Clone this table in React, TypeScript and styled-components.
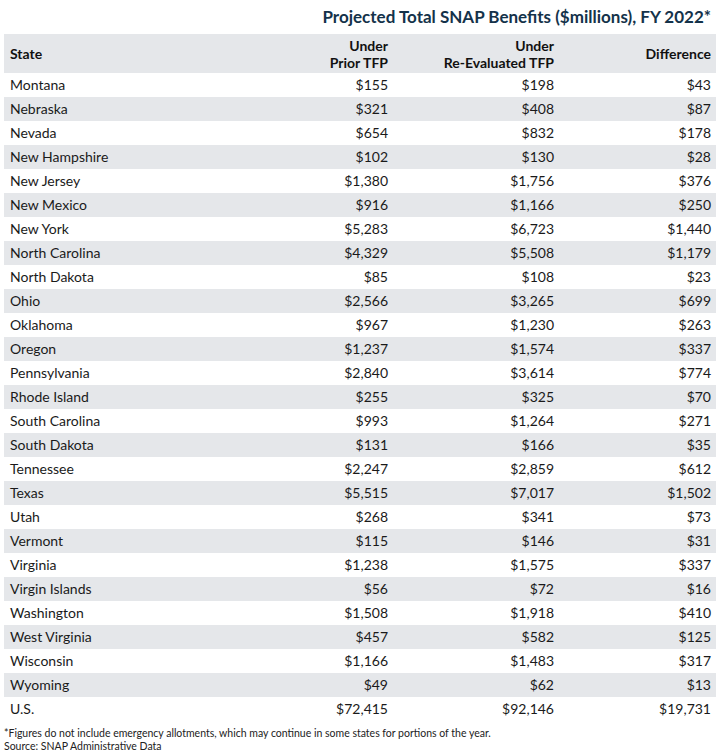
import React from "react";
import styled, { createGlobalStyle } from "styled-components";

const Global = createGlobalStyle`
  html, body { margin: 0; padding: 0; background: #ffffff; }
  body { font-family: "Lato", "Open Sans", "Liberation Sans", sans-serif; color: #1a1a1a; }
`;

const Page = styled.div`
  width: 712px;
  padding: 0 8px 0 4px;
`;

const Title = styled.div`
  height: 34px;
  display: flex;
  align-items: center;
  justify-content: flex-end;
  padding-right: 5px;
  font-size: 17px;
  font-weight: 700;
  color: #14324a;
  padding-bottom: 1px;
  box-sizing: border-box;
`;

const cols = "223px 166px 166px 157px";

const HeaderRow = styled.div`
  display: grid;
  grid-template-columns: ${cols};
  height: 39px;
  background: #e5e7ea;
  font-weight: 700;
  font-size: 14px;
  line-height: 17px;
  color: #111;
`;

const HeadCell = styled.div<{ $left?: boolean }>`
  display: flex;
  align-items: center;
  justify-content: ${(p) => (p.$left ? "flex-start" : "flex-end")};
  text-align: ${(p) => (p.$left ? "left" : "right")};
  padding: ${(p) => (p.$left ? "0 0 0 6px" : "0 5px 0 0")};
`;

const Row = styled.div<{ $shaded: boolean }>`
  display: grid;
  grid-template-columns: ${cols};
  height: 24px;
  box-sizing: border-box;
  padding-bottom: 2px;
  align-items: center;
  background: ${(p) => (p.$shaded ? "#e5e7ea" : "#ffffff")};
  font-size: 14px;
`;

const Cell = styled.div<{ $left?: boolean }>`
  text-align: ${(p) => (p.$left ? "left" : "right")};
  padding: ${(p) => (p.$left ? "0 0 0 6px" : "0 5px 0 0")};
`;

const Footer = styled.div`
  margin-top: 6px;
  font-size: 10.5px;
  line-height: 13px;
  color: #222;
`;

const data: [string, string, string, string][] = [
  ["Montana", "$155", "$198", "$43"],
  ["Nebraska", "$321", "$408", "$87"],
  ["Nevada", "$654", "$832", "$178"],
  ["New Hampshire", "$102", "$130", "$28"],
  ["New Jersey", "$1,380", "$1,756", "$376"],
  ["New Mexico", "$916", "$1,166", "$250"],
  ["New York", "$5,283", "$6,723", "$1,440"],
  ["North Carolina", "$4,329", "$5,508", "$1,179"],
  ["North Dakota", "$85", "$108", "$23"],
  ["Ohio", "$2,566", "$3,265", "$699"],
  ["Oklahoma", "$967", "$1,230", "$263"],
  ["Oregon", "$1,237", "$1,574", "$337"],
  ["Pennsylvania", "$2,840", "$3,614", "$774"],
  ["Rhode Island", "$255", "$325", "$70"],
  ["South Carolina", "$993", "$1,264", "$271"],
  ["South Dakota", "$131", "$166", "$35"],
  ["Tennessee", "$2,247", "$2,859", "$612"],
  ["Texas", "$5,515", "$7,017", "$1,502"],
  ["Utah", "$268", "$341", "$73"],
  ["Vermont", "$115", "$146", "$31"],
  ["Virginia", "$1,238", "$1,575", "$337"],
  ["Virgin Islands", "$56", "$72", "$16"],
  ["Washington", "$1,508", "$1,918", "$410"],
  ["West Virginia", "$457", "$582", "$125"],
  ["Wisconsin", "$1,166", "$1,483", "$317"],
  ["Wyoming", "$49", "$62", "$13"],
  ["U.S.", "$72,415", "$92,146", "$19,731"],
];

export default function App() {
  return (
    <Page>
      <Global />
      <Title>Projected Total SNAP Benefits ($millions), FY 2022*</Title>
      <HeaderRow>
        <HeadCell $left>State</HeadCell>
        <HeadCell>
          Under
          <br />
          Prior TFP
        </HeadCell>
        <HeadCell>
          Under
          <br />
          Re-Evaluated TFP
        </HeadCell>
        <HeadCell>Difference</HeadCell>
      </HeaderRow>
      {data.map((r, i) => (
        <Row key={r[0]} $shaded={i % 2 === 1}>
          <Cell $left>{r[0]}</Cell>
          <Cell>{r[1]}</Cell>
          <Cell>{r[2]}</Cell>
          <Cell>{r[3]}</Cell>
        </Row>
      ))}
      <Footer>
        *Figures do not include emergency allotments, which may continue in some states for portions of the year.
        <br />
        Source: SNAP Administrative Data
      </Footer>
    </Page>
  );
}
